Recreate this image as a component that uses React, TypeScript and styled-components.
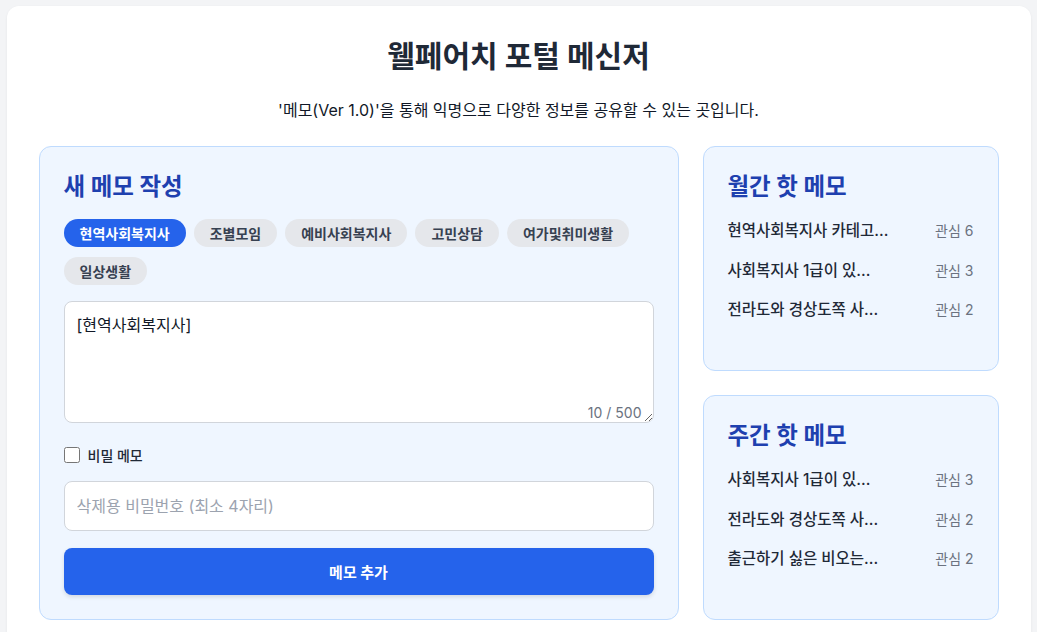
import React, { useState } from "react";
import styled, { createGlobalStyle } from "styled-components";

const categories = [
  "현역사회복지사",
  "조별모임",
  "예비사회복지사",
  "고민상담",
  "여가및취미생활",
  "일상생활",
];

const monthlyHot = [
  { title: "현역사회복지사 카테고...", likes: 6 },
  { title: "사회복지사 1급이 있...", likes: 3 },
  { title: "전라도와 경상도쪽 사...", likes: 2 },
];

const weeklyHot = [
  { title: "사회복지사 1급이 있...", likes: 3 },
  { title: "전라도와 경상도쪽 사...", likes: 2 },
  { title: "출근하기 싫은 비오는...", likes: 2 },
];

const App: React.FC = () => {
  const [category, setCategory] = useState("현역사회복지사");
  const [content, setContent] = useState("[현역사회복지사]\n");
  const [secret, setSecret] = useState(false);
  const [password, setPassword] = useState("");

  return (
    <>
      <GlobalStyle />
      <Page>
        <Header>
          <Title>웰페어치 포털 메신저</Title>
          <Subtitle>
            '메모(Ver 1.0)'을 통해 익명으로 다양한 정보를 공유할 수 있는 곳입니다.
          </Subtitle>
        </Header>
        <Columns>
          <Card>
            <CardTitle>새 메모 작성</CardTitle>
            <TagList>
              {categories.map((c) => (
                <Tag key={c} active={c === category} onClick={() => setCategory(c)}>
                  {c}
                </Tag>
              ))}
            </TagList>
            <TextAreaWrap>
              <MemoInput
                value={content}
                onChange={(e) => setContent(e.target.value)}
              />
              <Counter>{content.length} / 500</Counter>
            </TextAreaWrap>
            <CheckRow>
              <CheckBox
                type="checkbox"
                checked={secret}
                onChange={(e) => setSecret(e.target.checked)}
              />
              비밀 메모
            </CheckRow>
            <PasswordInput
              type="password"
              placeholder="삭제용 비밀번호 (최소 4자리)"
              value={password}
              onChange={(e) => setPassword(e.target.value)}
            />
            <SubmitButton>메모 추가</SubmitButton>
          </Card>
          <Side>
            <HotCard>
              <CardTitle>월간 핫 메모</CardTitle>
              <HotList>
                {monthlyHot.map((m, i) => (
                  <HotItem key={i}>
                    <HotTitle>{m.title}</HotTitle>
                    <HotLikes>관심 {m.likes}</HotLikes>
                  </HotItem>
                ))}
              </HotList>
            </HotCard>
            <HotCard>
              <CardTitle>주간 핫 메모</CardTitle>
              <HotList>
                {weeklyHot.map((m, i) => (
                  <HotItem key={i}>
                    <HotTitle>{m.title}</HotTitle>
                    <HotLikes>관심 {m.likes}</HotLikes>
                  </HotItem>
                ))}
              </HotList>
            </HotCard>
          </Side>
        </Columns>
      </Page>
    </>
  );
};

export default App;

const GlobalStyle = createGlobalStyle`
  * {
    box-sizing: border-box;
  }
  body {
    margin: 0;
    padding: 6px 0 0;
    background: #f3f4f6;
    font-family: Inter, "Noto Sans CJK KR", sans-serif;
    color: #1f2937;
  }
`;

const Page = styled.div`
  max-width: 1024px;
  margin: 0 auto;
  background: #ffffff;
  border-radius: 12px;
  box-shadow: 0 1px 3px rgba(0, 0, 0, 0.06);
  padding: 32px 32px 40px;
`;

const Header = styled.header`
  display: flex;
  flex-direction: column;
  align-items: center;
  margin-bottom: 24px;
`;

const Title = styled.h1`
  margin: 0 0 24px;
  font-size: 30px;
  line-height: 36px;
  font-weight: 700;
  color: #1f2937;
`;

const Subtitle = styled.p`
  margin: 0;
  font-size: 16px;
  line-height: 24px;
  color: #111827;
`;

const Columns = styled.div`
  display: grid;
  grid-template-columns: 640px 1fr;
  gap: 24px;
`;

const Card = styled.section`
  display: flex;
  flex-direction: column;
  background: #eff6ff;
  border: 1px solid #bfdbfe;
  border-radius: 12px;
  padding: 24px;
`;

const CardTitle = styled.h2`
  margin: 0 0 16px;
  font-size: 23.5px;
  line-height: 32px;
  font-weight: 700;
  color: #1e40af;
`;

const TagList = styled.div`
  display: flex;
  flex-wrap: wrap;
  column-gap: 8px;
  row-gap: 10px;
  margin-bottom: 16px;
`;

const Tag = styled.button<{ active?: boolean }>`
  height: 28px;
  padding: 0 16px;
  border: none;
  border-radius: 999px;
  font-family: inherit;
  font-size: 14px;
  font-weight: 700;
  cursor: pointer;
  background: ${({ active }) => (active ? "#2563eb" : "#e5e7eb")};
  color: ${({ active }) => (active ? "#ffffff" : "#374151")};
`;

const TextAreaWrap = styled.div`
  position: relative;
  margin-bottom: 22px;
`;

const MemoInput = styled.textarea`
  display: block;
  width: 100%;
  height: 122px;
  padding: 12px;
  border: 1px solid #d1d5db;
  border-radius: 8px;
  background: #ffffff;
  font-family: inherit;
  font-size: 16px;
  line-height: 22px;
  color: #111827;
  resize: vertical;
  outline: none;
`;

const Counter = styled.span`
  position: absolute;
  right: 12px;
  bottom: 2px;
  font-size: 14px;
  color: #6b7280;
`;

const CheckRow = styled.label`
  display: flex;
  align-items: center;
  gap: 8px;
  font-size: 14px;
  font-weight: 500;
  color: #1f2937;
  margin-bottom: 16px;
`;

const CheckBox = styled.input`
  margin: 0;
  width: 16px;
  height: 16px;
`;

const PasswordInput = styled.input`
  width: 100%;
  height: 50px;
  padding: 0 12px;
  border: 1px solid #d1d5db;
  border-radius: 8px;
  background: #ffffff;
  font-family: inherit;
  font-size: 16px;
  color: #111827;
  outline: none;
  margin-bottom: 17px;

  &::placeholder {
    color: #9ca3af;
  }
`;

const SubmitButton = styled.button`
  width: 100%;
  height: 47px;
  border: none;
  border-radius: 8px;
  background: #2563eb;
  color: #ffffff;
  font-family: inherit;
  font-size: 15px;
  font-weight: 700;
  box-shadow: 0 2px 4px rgba(0, 0, 0, 0.12);
  cursor: pointer;
`;

const Side = styled.div`
  display: flex;
  flex-direction: column;
  gap: 24px;
`;

const HotCard = styled(Card)`
  flex: 1;
`;

const HotList = styled.ul`
  list-style: none;
  margin: -8px 0 0;
  padding: 0;
`;

const HotItem = styled.li`
  display: flex;
  justify-content: space-between;
  align-items: center;
  padding: 8px 0;
  line-height: 23.5px;
`;

const HotTitle = styled.span`
  font-size: 15.5px;
  font-weight: 500;
  color: #1f2937;
`;

const HotLikes = styled.span`
  font-size: 14px;
  color: #6b7280;
`;
